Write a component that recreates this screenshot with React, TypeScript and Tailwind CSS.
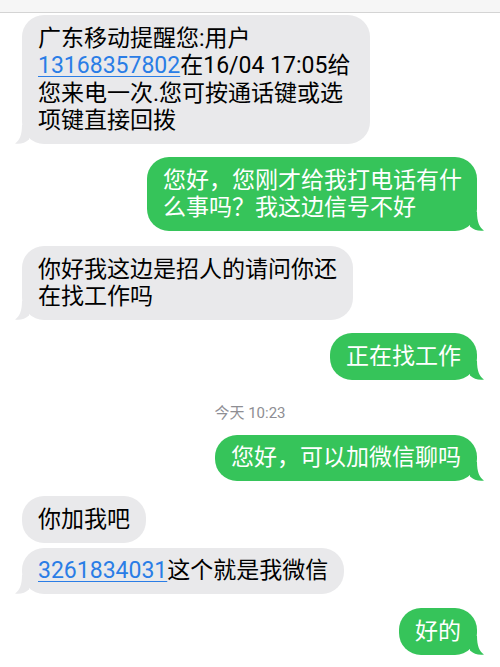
import React from 'react';

const FONT = { fontFamily: 'Roboto, "Noto Sans CJK SC", sans-serif' };

const Tail: React.FC<{ side: 'left' | 'right'; color: string }> = ({ side, color }) => (
  <svg
    width="20"
    height="20"
    viewBox="0 0 20 20"
    className={`absolute bottom-0 ${side === 'left' ? '-left-[7px]' : '-right-[7px] -scale-x-100'}`}
  >
    <path d="M7 1 C7 11 4.5 16.5 0 19.6 C5.5 20.4 10.5 18.8 14 15.5 L14 1 Z" fill={color} />
  </svg>
);

const Link: React.FC<{ children: React.ReactNode }> = ({ children }) => (
  <span className="text-[#2a7de6] underline decoration-1 underline-offset-[3px]">{children}</span>
);

type BubbleProps = {
  me?: boolean;
  tail?: boolean;
  className?: string;
  children: React.ReactNode;
};

const Bubble: React.FC<BubbleProps> = ({ me, tail = true, className = '', children }) => (
  <div className={`flex ${me ? 'justify-end pr-[23px]' : 'justify-start pl-[22px]'}`}>
    <div
      className={`relative rounded-[22px] px-4 py-[9.5px] text-[23px] leading-[27.5px] whitespace-nowrap ${
        me ? 'bg-[#36c45a] text-white' : 'bg-[#e9e9eb] text-black'
      } ${className}`}
    >
      {tail && <Tail side={me ? 'right' : 'left'} color={me ? '#36c45a' : '#e9e9eb'} />}
      <div className="relative">{children}</div>
    </div>
  </div>
);

export default function App() {
  return (
    <div className="w-[500px] h-[667px] bg-white overflow-hidden" style={FONT}>
      <div className="h-[13px] bg-[#f6f6f6] border-b border-[#d4d4d4]" />

      <div className="flex flex-col pt-[2px]">
        <Bubble className="w-[348px]">
          广东移动提醒您:用户
          <br />
          <Link>13168357802</Link>在16/04 17:05给
          <br />
          您来电一次.您可按通话键或选
          <br />
          项键直接回拨
        </Bubble>

        <div className="h-[13px]" />
        <Bubble me className="w-[330px]">
          您好，您刚才给我打电话有什
          <br />
          么事吗？我这边信号不好
        </Bubble>

        <div className="h-[15px]" />
        <Bubble className="w-[331px]">
          你好我这边是招人的请问你还
          <br />
          在找工作吗
        </Bubble>

        <div className="h-[13px]" />
        <Bubble me>正在找工作</Bubble>

        <div className="pt-[24px] pb-[12px] text-center text-[15px] leading-[19px] text-[#8e8e93]">
          今天 10:23
        </div>

        <Bubble me>您好，可以加微信聊吗</Bubble>

        <div className="h-[15px]" />
        <Bubble tail={false}>你加我吧</Bubble>

        <div className="h-[5px]" />
        <Bubble>
          <Link>3261834031</Link>这个就是我微信
        </Bubble>

        <div className="h-[14px]" />
        <Bubble me>好的</Bubble>
      </div>
    </div>
  );
}
